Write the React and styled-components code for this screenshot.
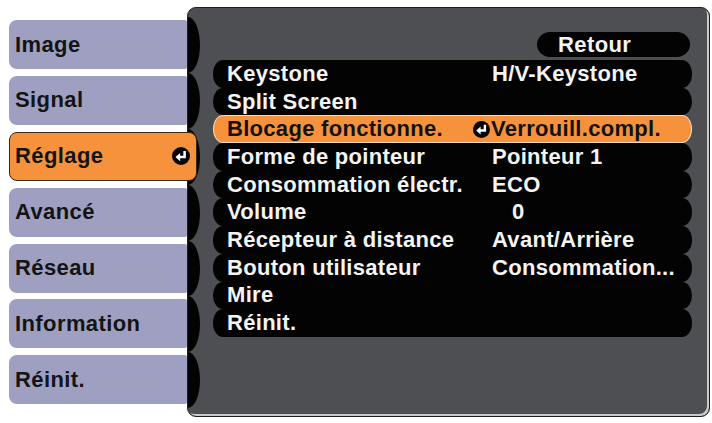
import React from 'react';
import styled, { createGlobalStyle } from 'styled-components';

const Global = createGlobalStyle`
  html, body { margin: 0; padding: 0; background: #ffffff; }
  body { font-family: "Liberation Sans", Arial, sans-serif; }
`;

const Screen = styled.div`
  width: 712px;
  height: 423px;
  box-sizing: border-box;
  display: flex;
  padding: 7px 0 0 9px;
`;

const Tabs = styled.div`
  width: 178px;
  flex: none;
  display: flex;
  flex-direction: column;
  gap: 6.9px;
  padding-top: 13px;
  position: relative;
  z-index: 2;
`;

const Tab = styled.div`
  height: 49px;
  width: ${p => (p.$active ? '188px' : '178px')};
  box-sizing: border-box;
  display: flex;
  align-items: center;
  justify-content: space-between;
  padding: 0 6px 0 ${p => (p.$active ? '5px' : '6px')};
  background: ${p => (p.$active ? '#f6923c' : '#9e9fc1')};
  border: ${p => (p.$active ? '1px solid #3a2614' : 'none')};
  border-radius: ${p => (p.$active ? '8px' : '8px 2px 2px 8px')};
  color: #141414;
  font: bold 22px "Liberation Sans", Arial, sans-serif;
  letter-spacing: 0.4px;
`;

const Panel = styled.div`
  width: 523px;
  height: 410px;
  flex: none;
  box-sizing: border-box;
  display: flex;
  background: #4e4f53;
  border: 1px solid #1e1e1e;
  border-radius: 9px;
  box-shadow: inset -2px -2px 0 #c9c9c9;
`;

const Strip = styled.div`
  width: 12px;
  flex: none;
  display: flex;
  flex-direction: column;
  padding-top: 9px;
`;

const Bulge = styled.div`
  height: 55.9px;
  flex: none;
  background: #030303;
  border-radius: 0 100% 100% 0 / 0 50% 50% 0;
`;

const Menu = styled.div`
  width: 492px;
  box-sizing: border-box;
  display: flex;
  flex-direction: column;
  padding: 24px 0 0 13px;
`;

const Back = styled.div`
  align-self: flex-end;
  width: 153px;
  height: 25px;
  margin: 0 2px 3px 0;
  box-sizing: border-box;
  padding-left: 21px;
  background: #030303;
  border-radius: 13px / 50%;
  color: #f4f4f4;
  font: bold 22px/25px "Liberation Sans", Arial, sans-serif;
  letter-spacing: 0.4px;
`;

const Row = styled.div`
  height: 27.7px;
  box-sizing: border-box;
  display: grid;
  grid-template-columns: 265px 1fr;
  align-items: center;
  padding-left: ${p => (p.$selected ? '13px' : '14px')};
  background: ${p => (p.$selected ? '#f6923c' : '#030303')};
  border: ${p => (p.$selected ? '1px solid #f3d8bb' : 'none')};
  border-radius: 10px / 50%;
  color: ${p => (p.$selected ? '#121212' : '#f4f4f4')};
  font: bold 22px "Liberation Sans", Arial, sans-serif;
  letter-spacing: 0.3px;
  white-space: nowrap;
`;

const Value = styled.span`
  display: inline-flex;
  align-items: center;
  margin-left: ${p => p.$shift || 0}px;
`;

const IconWrap = styled.span`
  display: inline-flex;
  margin-right: 1px;
`;

const EnterIcon = ({ size = 17 }) => (
  <svg width={size} height={size} viewBox="0 0 20 20">
    <circle cx="10" cy="10" r="10" fill="#050505" />
    <path d="M14 4.5 V11.2 H8" stroke="#fff" strokeWidth="2.8" fill="none" />
    <path d="M3.8 11.2 L9 6.6 V15.8 Z" fill="#fff" />
  </svg>
);

const tabs = ['Image', 'Signal', 'Réglage', 'Avancé', 'Réseau', 'Information', 'Réinit.'];

const rows = [
  { label: 'Keystone', value: 'H/V-Keystone' },
  { label: 'Split Screen', value: '' },
  { label: 'Blocage fonctionne.', value: 'Verrouill.compl.', selected: true, icon: true },
  { label: 'Forme de pointeur', value: 'Pointeur 1' },
  { label: 'Consommation électr.', value: 'ECO' },
  { label: 'Volume', value: '0', shift: 20 },
  { label: 'Récepteur à distance', value: 'Avant/Arrière' },
  { label: 'Bouton utilisateur', value: 'Consommation...' },
  { label: 'Mire', value: '' },
  { label: 'Réinit.', value: '' },
];

export default function App() {
  return (
    <>
      <Global />
      <Screen>
        <Tabs>
          {tabs.map(t => (
            <Tab key={t} $active={t === 'Réglage'}>
              <span>{t}</span>
              {t === 'Réglage' && <EnterIcon size={18} />}
            </Tab>
          ))}
        </Tabs>
        <Panel>
          <Strip>
            {tabs.map(t => (
              <Bulge key={t} />
            ))}
          </Strip>
          <Menu>
            <Back>Retour</Back>
            {rows.map(r => (
              <Row key={r.label} $selected={r.selected}>
                <span>{r.label}</span>
                <Value $shift={r.icon ? -19 : r.shift}>
                  {r.icon && (
                    <IconWrap>
                      <EnterIcon size={17} />
                    </IconWrap>
                  )}
                  {r.value}
                </Value>
              </Row>
            ))}
          </Menu>
        </Panel>
      </Screen>
    </>
  );
}
